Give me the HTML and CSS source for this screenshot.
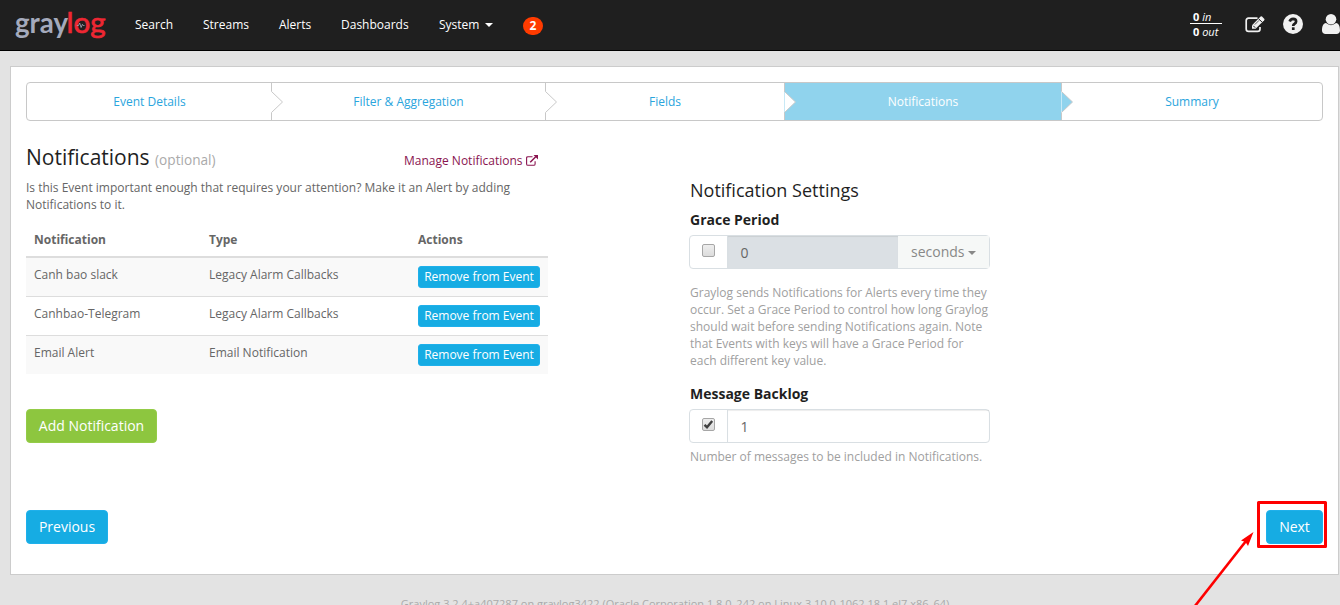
FILE: index.html
```html
<!DOCTYPE html>
<html lang="en">
<head>
<meta charset="utf-8">
<title>Graylog - Event Definition</title>
<link rel="stylesheet" href="styles.css">
</head>
<body>
<nav class="navbar">
  <svg class="logo" width="94" height="34" viewBox="0 0 94 34" role="img" aria-label="graylog">
    <text class="logo-gray" x="1" y="24.500" textLength="53" lengthAdjust="spacingAndGlyphs">gray</text>
    <text class="logo-log" x="52.500" y="24.500" textLength="39" lengthAdjust="spacingAndGlyphs">log</text>
    <path class="logo-pulse" d="M62.800 17.500h1.700l1.200-2.500 1.400 4.500 1.300-3.200.8 1.200h1.300"/>
  </svg>
  <a class="nav-link nav-search">Search</a>
  <a class="nav-link nav-streams">Streams</a>
  <a class="nav-link nav-alerts">Alerts</a>
  <a class="nav-link nav-dash">Dashboards</a>
  <a class="nav-link nav-system">System <i class="caret"></i></a>
  <span class="badge">2</span>
  <div class="nav-right">
    <div class="throughput"><div class="in"><b>0</b> <i>in</i></div><div><b>0</b> <i>out</i></div></div>
    <svg class="icon-edit" width="20" height="20" viewBox="0 0 20 20">
      <path d="M12.5 3.2H3.6Q1.200 3.200 1.200 5.600V14Q1.200 16.400 3.600 16.400H12.600Q15 16.400 15 14V12" fill="none" stroke="#f1f1f1" stroke-width="1.700"/>
      <path d="M7 10.200L15.600 1.600Q16.300 1 17 1.600L19.200 3.800Q19.900 4.500 19.200 5.200L10.600 13.800H7Z" fill="#f1f1f1"/>
      <path d="M13.600 3.700l3.600 3.600M8.300 10.800l1.900 1.900" stroke="#1f1f1f" stroke-width="1"/>
      <path d="M9.800 9.600l4.300-4.300" stroke="#1f1f1f" stroke-width=".7"/>
    </svg>
    <svg class="icon-help" width="20" height="20" viewBox="0 0 20 20">
      <circle cx="10" cy="10" r="10" fill="#f1f1f1"/>
      <path d="M6.700 7.500Q7.500 4.800 10.100 4.800Q13.100 4.900 13.100 7.500Q13.100 8.900 11.600 9.700Q10.200 10.400 10.200 12" fill="none" stroke="#1f1f1f" stroke-width="2.700"/>
      <rect x="8.900" y="13.300" width="2.700" height="2.700" fill="#1f1f1f"/>
    </svg>
    <svg class="icon-user" width="18" height="20" viewBox="0 0 18 20">
      <path d="M4 9C1 9 0 13 0 16.500C0 18.500 1.500 20 3.500 20H14.500C16.500 20 18 18.500 18 16.500C18 13 17 9 14 9Q9 13.300 4 9Z" fill="#f1f1f1"/>
      <circle cx="9" cy="5.300" r="5.300" fill="#f1f1f1"/>
    </svg>
  </div>
</nav>

<main class="card">
  <div class="steps">
    <div class="step step-details">Event Details<svg class="chevron" width="13" height="37" viewBox="0 0 13 37"><path d="M.5 0V8.500L11.500 19L.5 29.500V37"/></svg></div>
    <div class="step step-filter">Filter &amp; Aggregation<svg class="chevron" width="13" height="37" viewBox="0 0 13 37"><path d="M.5 0V8.500L11.500 19L.5 29.500V37"/></svg></div>
    <div class="step step-fields">Fields<svg class="chevron" width="13" height="37" viewBox="0 0 13 37"><path d="M.5 0V8.500L11.500 19L.5 29.500V37"/></svg></div>
    <div class="step step-notifications active">Notifications<svg class="chevron chevron-active" width="13" height="37" viewBox="0 0 13 37"><path d="M.5 0V8.500L11.500 19L.5 29.500V37"/></svg></div>
    <div class="step step-summary">Summary</div>
  </div>

  <div class="columns">
    <section class="left">
      <div class="heading">
        <h2>Notifications <small>(optional)</small></h2>
        <a class="manage">Manage Notifications <svg width="12" height="11" viewBox="0 0 12 11"><path d="M6.500 1.700H2Q.6 1.700 .6 3V8.900Q.6 10.300 2 10.300H7.700Q9.100 10.300 9.100 8.900V6.300" fill="none" stroke="currentColor" stroke-width="1.100"/><path d="M4.200 7.300L10 1.500" stroke="currentColor" stroke-width="1.500"/><path d="M7.500 0H12V4.500Z" fill="currentColor"/></svg></a>
      </div>
      <p class="intro">Is this Event important enough that requires your attention? Make it an Alert by adding Notifications to it.</p>
      <table class="table">
        <thead><tr><th class="c-name">Notification</th><th class="c-type">Type</th><th class="c-act">Actions</th></tr></thead>
        <tbody>
          <tr><td>Canh bao slack</td><td>Legacy Alarm Callbacks</td><td><button class="btn-xs">Remove from Event</button></td></tr>
          <tr><td>Canhbao-Telegram</td><td>Legacy Alarm Callbacks</td><td><button class="btn-xs">Remove from Event</button></td></tr>
          <tr><td>Email Alert</td><td>Email Notification</td><td><button class="btn-xs">Remove from Event</button></td></tr>
        </tbody>
      </table>
      <button class="btn btn-add">Add Notification</button>
    </section>

    <section class="right">
      <h3>Notification Settings</h3>
      <label class="label">Grace Period</label>
      <div class="group">
        <span class="addon"><span class="check"></span></span>
        <span class="field disabled">0</span>
        <span class="unit">seconds <i class="caret"></i></span>
      </div>
      <p class="help help-grace">Graylog sends Notifications for Alerts every time they occur. Set a Grace Period to control how long Graylog should wait before sending Notifications again. Note that Events with keys will have a Grace Period for each different key value.</p>
      <label class="label">Message Backlog</label>
      <div class="group">
        <span class="addon"><span class="check"><svg width="11" height="11" viewBox="0 0 11 11"><path d="M1.500 5.800L4 8.200L9.200 2" fill="none" stroke="#404040" stroke-width="2.400"/></svg></span></span>
        <span class="field">1</span>
      </div>
      <p class="help help-backlog">Number of messages to be included in Notifications.</p>
    </section>
  </div>

  <div class="actions">
    <button class="btn btn-prev">Previous</button>
    <button class="btn btn-next">Next</button>
  </div>
</main>

<footer class="footer">Graylog 3.2.4+a407287 on graylog3422 (Oracle Corporation 1.8.0_242 on Linux 3.10.0-1062.18.1.el7.x86_64)</footer>

<svg class="annotation" width="150" height="110" viewBox="1190 495 150 110">
  <rect x="1258.500" y="502.500" width="67" height="44" fill="none" stroke="#fe0000" stroke-width="3" stroke-linejoin="round"/>
  <path d="M1195 606L1246 541" stroke="#fe0000" stroke-width="2.600"/>
  <path d="M1253.500 532L1248 546L1245.500 542L1241 540.500Z" fill="#fe0000"/>
</svg>
</body>
</html>
```
FILE: styles.css
```css
* { box-sizing: border-box; }

body {
  margin: 0;
  height: 605px;
  overflow: hidden;
  position: relative;
  background: #e3e3e3;
  color: #666;
  font: 12px/17px "Open Sans", sans-serif;
}

h2, h3, p { margin: 0; font-weight: 400; }

button {
  border: 1px solid;
  padding: 0;
  font-family: inherit;
  color: #fff;
}

/* Navigation */
.navbar {
  display: flex;
  height: 51px;
  background: #1f1f1f;
  border-bottom: 1px solid #000;
  color: #fff;
}
.logo { margin: 8px 0 0 14px; flex: none; overflow: visible; }
.logo text { font-family: Lato, sans-serif; font-size: 28px; }
.logo-gray { fill: #a4aabc; font-weight: 700; }
.logo-log { fill: #ee2733; stroke: #ee2733; stroke-width: .7; font-weight: 400; }
.logo-pulse { fill: none; stroke: #a4aabc; stroke-width: .8; }
.nav-link { flex: none; padding-top: 16px; white-space: nowrap; }
.nav-search { width: 68px; margin-left: 27px; }
.nav-streams { width: 76px; }
.nav-alerts { width: 62px; }
.nav-dash { width: 98px; }
.nav-system { width: 84px; }
.caret {
  display: inline-block;
  margin-left: 2px;
  vertical-align: 2px;
  border: 4px solid transparent;
  border-top-color: currentColor;
  border-bottom: 0;
}
.badge {
  width: 20px;
  height: 18px;
  margin-top: 17px;
  border-radius: 10px;
  background: #ff3b00;
  font-weight: 700;
  line-height: 17px;
  text-align: center;
}
.nav-right { display: flex; flex: none; margin-left: auto; }
.throughput { width: 32px; margin: 10px 23px 0 0; font-size: 11px; line-height: 14px; white-space: nowrap; }
.throughput div { padding-left: 3px; }
.throughput .in { height: 14px; border-bottom: 1px solid #fff; }
.throughput .in + div { padding-top: 1px; }
.icon-edit { margin: 15px 18px 0 0; }
.icon-help { margin: 14px 19px 0 0; }
.icon-user { margin-top: 14px; }

/* Wizard card */
.card {
  width: 1329px;
  height: 509px;
  margin: 15px 0 0 10px;
  padding: 15px;
  border: 1px solid #ccc;
  background: #fff;
}
.steps {
  display: flex;
  height: 39px;
  border: 1px solid #c8c8c8;
  border-radius: 4px;
  color: #2aa5dd;
  line-height: 37px;
  text-align: center;
}
.step { position: relative; flex: none; padding-left: 1px; }
.step-details { width: 244px; }
.step-filter { width: 274px; }
.step-fields { width: 239px; }
.step-notifications { width: 277px; }
.step-summary { flex: 1; }
.step.active { background: #90d3ed; color: #fff; }
.chevron { position: absolute; top: 0; left: 100%; z-index: 1; fill: #fff; stroke: #c8c8c8; stroke-width: 1; }
.chevron-active { fill: #90d3ed; }

.columns { display: flex; height: 389px; }
.left { width: 522px; }
.heading { display: flex; height: 58px; padding-top: 21px; }
h2 { width: 378px; color: #1f1f1f; font-size: 21px; line-height: 30px; }
h2 small { color: #aaa; font-size: 13.650px; }
.manage { padding-top: 10px; color: #8a1450; white-space: nowrap; }
.manage svg { vertical-align: -1px; }
.intro { height: 43px; }
.table { width: 522px; table-layout: fixed; border-collapse: separate; border-spacing: 0; }
.c-name { width: 175px; }
.c-type { width: 209px; }
th { height: 36px; padding: 9px 8px 8px; text-align: left; line-height: 17px; border-bottom: 2px solid #ddd; }
td { height: 39px; padding: 8px; vertical-align: top; border-top: 1px solid #ddd; }
tbody tr:first-child td { height: 38px; border-top: 0; }
tbody tr:nth-child(odd) { background: #f9f9f9; }
.btn-xs {
  display: block;
  width: 122px;
  height: 22px;
  border-radius: 3px;
  border-color: #1fb0eb;
  background: #16ace3;
  font-size: 12px;
  line-height: 18px;
}
.btn { height: 34px; border-radius: 4px; border-color: #1fb0eb; background: #16ace3; font-size: 14px; line-height: 20px; }
.btn-add { width: 131px; margin-top: 35px; border-color: #94cc48; background: #8dc63f; }
.btn-prev { width: 82px; }
.btn-next { width: 57px; }

.right { width: 301px; margin-left: 141px; padding: 56px 0 0; }
h3 { padding-left: 1px; color: #1f1f1f; font-size: 18px; line-height: 26px; }
.label { display: block; height: 32px; padding: 7px 0 0 1px; color: #1f1f1f; font-size: 14px; font-weight: 700; line-height: 20px; }
.group {
  display: flex;
  height: 34px;
  border: 1px solid #d9dfe3;
  border-radius: 4px;
  font-size: 14px;
}
.addon { width: 38px; padding: 8px 0 0 12px; border-right: 1px solid #d9dfe3; }
.check {
  display: block;
  width: 13px;
  height: 13px;
  border: 1px solid #a6a6a6;
  border-radius: 2px;
  background: linear-gradient(#eee, #dcdcdc);
}
.check svg { display: block; }
.field { flex: 1; padding: 8px 12.500px; line-height: 17px; box-shadow: inset 0 1px 1px rgba(0,0,0,.075); }
.field.disabled { background: #dbe0e4; }
.unit { width: 91px; padding: 6px 0 0 13px; background: #f6f8f7; color: #888; line-height: 20px; }
.unit .caret { margin-left: 0; }
.help { padding-left: 1px; color: #a0a0a0; }
.help-grace { height: 108px; padding-top: 15px; }
.help-backlog { padding-top: 5px; }

.actions { display: flex; justify-content: space-between; }
.footer { padding: 20px 0 0 10px; color: #aaa; font-size: 11px; text-align: center; white-space: nowrap; }

/* Callout drawn over the Next button */
.annotation { position: absolute; left: 1190px; top: 495px; pointer-events: none; }
```
